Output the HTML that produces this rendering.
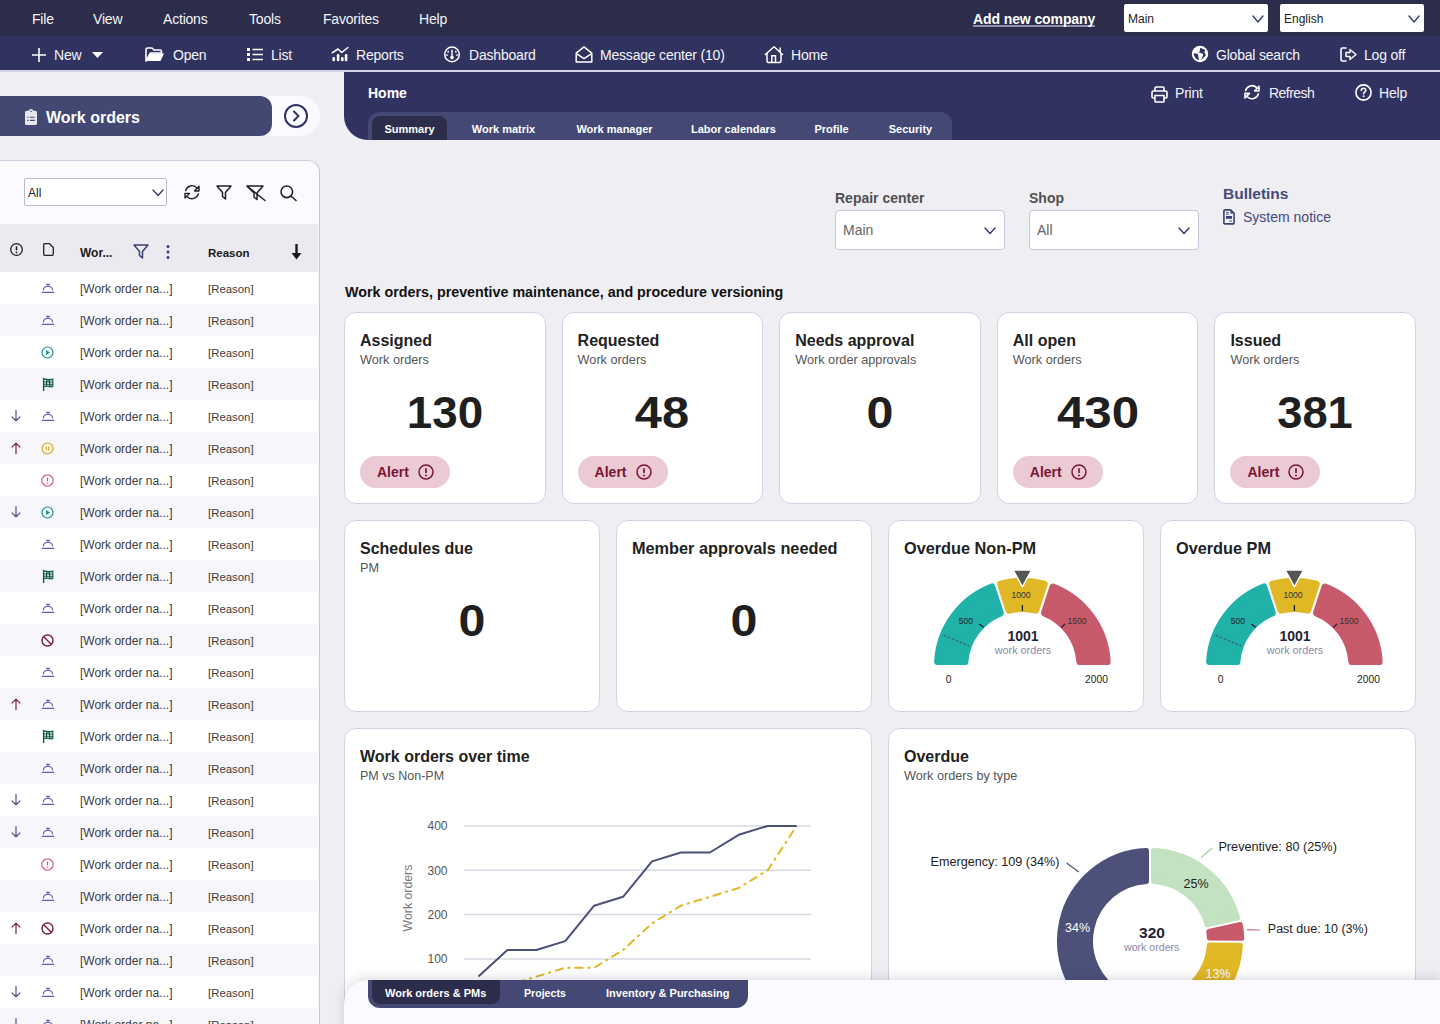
<!DOCTYPE html><html><head><meta charset="utf-8"><style>
html,body{margin:0;padding:0;}
body{width:1440px;height:1024px;overflow:hidden;position:relative;background:#efeef3;font-family:"Liberation Sans", sans-serif;}
.t{position:absolute;white-space:nowrap;}
svg{display:block;}
</style></head><body>
<div style="position:absolute;left:0px;top:0px;width:1440px;height:36px;background:#2b2d4a;"></div>
<div class="t" style="left:32px;top:12.00px;font-size:14px;font-weight:400;color:#f4f4f8;line-height:15.64px;letter-spacing:-0.2px;">File</div>
<div class="t" style="left:93px;top:12.00px;font-size:14px;font-weight:400;color:#f4f4f8;line-height:15.64px;letter-spacing:-0.2px;">View</div>
<div class="t" style="left:163px;top:12.00px;font-size:14px;font-weight:400;color:#f4f4f8;line-height:15.64px;letter-spacing:-0.2px;">Actions</div>
<div class="t" style="left:249px;top:12.00px;font-size:14px;font-weight:400;color:#f4f4f8;line-height:15.64px;letter-spacing:-0.2px;">Tools</div>
<div class="t" style="left:323px;top:12.00px;font-size:14px;font-weight:400;color:#f4f4f8;line-height:15.64px;letter-spacing:-0.2px;">Favorites</div>
<div class="t" style="left:419px;top:12.00px;font-size:14px;font-weight:400;color:#f4f4f8;line-height:15.64px;letter-spacing:-0.2px;">Help</div>
<div style="position:absolute;left:973px;top:25px;width:122px;height:2px;background:#8f8fa8;"></div>
<div class="t" style="left:973px;top:12.00px;font-size:14px;font-weight:700;color:#fff;line-height:15.64px;letter-spacing:-0.1px;">Add new company</div>
<div style="position:absolute;left:1124px;top:4px;width:144px;height:28px;background:#fff;border-radius:2px;"></div>
<div class="t" style="left:1128px;top:13.00px;font-size:12px;font-weight:400;color:#222;line-height:13.40px;">Main</div>
<svg style="position:absolute;left:1253px;top:16px;overflow:visible;" width="10" height="6" viewBox="0 0 10 6" fill="none"><path d="M0 0 L5.0 6 L10 0" stroke="#3a3f70" stroke-width="1.4" stroke-linecap="round" stroke-linejoin="round"/></svg>
<div style="position:absolute;left:1280px;top:4px;width:144px;height:28px;background:#fff;border-radius:2px;"></div>
<div class="t" style="left:1284px;top:13.00px;font-size:12px;font-weight:400;color:#222;line-height:13.40px;">English</div>
<svg style="position:absolute;left:1409px;top:16px;overflow:visible;" width="10" height="6" viewBox="0 0 10 6" fill="none"><path d="M0 0 L5.0 6 L10 0" stroke="#3a3f70" stroke-width="1.4" stroke-linecap="round" stroke-linejoin="round"/></svg>
<div style="position:absolute;left:0px;top:36px;width:1440px;height:34px;background:#30325f;"></div>
<div style="position:absolute;left:0px;top:70px;width:1440px;height:2px;background:#d4d3e0;"></div>
<svg style="position:absolute;left:32px;top:48px;overflow:visible;" width="14" height="14" viewBox="0 0 14 14" fill="none"><path d="M7 0V14M0 7H14" stroke="#fff" stroke-width="1.6"/></svg>
<div class="t" style="left:54px;top:48.00px;font-size:14px;font-weight:400;color:#f4f4f8;line-height:15.64px;letter-spacing:-0.2px;">New</div>
<svg style="position:absolute;left:92px;top:52px;overflow:visible;" width="11" height="6" viewBox="0 0 11 6" fill="none"><path d="M0 0H11L5.5 6Z" fill="#fff"/></svg>
<svg style="position:absolute;left:145px;top:47px;overflow:visible;" width="20" height="15" viewBox="0 0 20 15" fill="none"><path d="M1 2.5C1 1.7 1.7 1 2.5 1H7L9 3H15C15.8 3 16.5 3.7 16.5 4.5V6H5.5L1 14Z" stroke="#fff" stroke-width="1.6" stroke-linejoin="round"/><path d="M4.5 6.5H19L15.5 14H1Z" fill="#fff"/></svg>
<div class="t" style="left:173px;top:48.00px;font-size:14px;font-weight:400;color:#f4f4f8;line-height:15.64px;letter-spacing:-0.2px;">Open</div>
<svg style="position:absolute;left:247px;top:48px;overflow:visible;" width="16" height="13" viewBox="0 0 16 13" fill="none"><rect x="0" y="0" width="3" height="3" fill="#fff"/><rect x="0" y="5" width="3" height="3" fill="#fff"/><rect x="0" y="10" width="3" height="3" fill="#fff"/><path d="M5.5 1.5H16M5.5 6.5H16M5.5 11.5H16" stroke="#fff" stroke-width="1.5"/></svg>
<div class="t" style="left:271px;top:48.00px;font-size:14px;font-weight:400;color:#f4f4f8;line-height:15.64px;letter-spacing:-0.2px;">List</div>
<svg style="position:absolute;left:331px;top:46px;overflow:visible;" width="18" height="16" viewBox="0 0 18 16" fill="none"><path d="M1.1 6.8L7 3L10.75 6.5L16.9 1.5" stroke="#fff" stroke-width="1.5" stroke-linecap="round" stroke-linejoin="round"/><rect x="1.4" y="10.9" width="2.6" height="4.3" rx="1.2" fill="#fff"/><rect x="5.8" y="8" width="2.6" height="7.2" rx="1.2" fill="#fff"/><rect x="10" y="10.9" width="2.6" height="4.3" rx="1.2" fill="#fff"/><rect x="13.8" y="8" width="2.6" height="7.2" rx="1.2" fill="#fff"/></svg>
<div class="t" style="left:356px;top:48.00px;font-size:14px;font-weight:400;color:#f4f4f8;line-height:15.64px;letter-spacing:-0.2px;">Reports</div>
<svg style="position:absolute;left:443px;top:46px;overflow:visible;" width="18" height="18" viewBox="0 0 18 18" fill="none"><circle cx="9" cy="8.4" r="7.3" stroke="#fff" stroke-width="1.5"/><path d="M9 4.2V11" stroke="#fff" stroke-width="1.4" stroke-linecap="round"/><circle cx="9" cy="11.6" r="1.8" fill="#fff"/><circle cx="5.2" cy="5.7" r="0.9" fill="#fff"/><circle cx="12.8" cy="5.7" r="0.9" fill="#fff"/><circle cx="4" cy="9.1" r="0.9" fill="#fff"/><circle cx="14" cy="9.1" r="0.9" fill="#fff"/></svg>
<div class="t" style="left:469px;top:48.00px;font-size:14px;font-weight:400;color:#f4f4f8;line-height:15.64px;letter-spacing:-0.2px;">Dashboard</div>
<svg style="position:absolute;left:575px;top:46px;overflow:visible;" width="18" height="18" viewBox="0 0 18 18" fill="none"><path d="M1.2 7.2L9 0.9L16.8 7.2V16.1H1.2Z" stroke="#fff" stroke-width="1.5" stroke-linejoin="round"/><path d="M1.4 7.6L9 12.6L16.6 7.6" stroke="#fff" stroke-width="1.5" stroke-linejoin="round"/></svg>
<div class="t" style="left:600px;top:48.00px;font-size:14px;font-weight:400;color:#f4f4f8;line-height:15.64px;letter-spacing:-0.2px;">Message center (10)</div>
<svg style="position:absolute;left:764px;top:45px;overflow:visible;" width="20" height="19" viewBox="0 0 20 19" fill="none"><path d="M1.3 9.5L10.1 1.7L18.5 9.5" stroke="#fff" stroke-width="1.5" stroke-linecap="round" stroke-linejoin="round"/><path d="M16.2 2.5V7.2" stroke="#fff" stroke-width="1.5"/><path d="M3 8V15.5C3 16.5 3.5 17.4 4.5 17.4H15.5C16.5 17.4 17 16.5 17 15.5V8" stroke="#fff" stroke-width="1.5"/><path d="M7.8 17.4V10.8H11.5V17.4" stroke="#fff" stroke-width="1.5"/></svg>
<div class="t" style="left:791px;top:48.00px;font-size:14px;font-weight:400;color:#f4f4f8;line-height:15.64px;letter-spacing:-0.2px;">Home</div>
<svg style="position:absolute;left:1191px;top:45px;overflow:visible;" width="18" height="18" viewBox="0 0 18 18" fill="none"><defs><clipPath id="gclip"><circle cx="9" cy="9" r="6.6"/></clipPath></defs><circle cx="9" cy="9" r="8.2" fill="#fff"/><g clip-path="url(#gclip)" fill="#30325f"><path d="M9.4 2.8L14.2 5.1L13.3 7.5L15 10.3L10 15.2L11.8 11L12.2 9.1L9.9 8L7.1 7.3L9 6.3L9 3.8Z"/><path d="M2.7 8.2L6.7 8.7L7.1 10.1L7.9 15.2L4.8 13.4L2.6 10.1Z"/></g></svg>
<div class="t" style="left:1216px;top:48.00px;font-size:14px;font-weight:400;color:#f4f4f8;line-height:15.64px;letter-spacing:-0.2px;">Global search</div>
<svg style="position:absolute;left:1340px;top:47px;overflow:visible;" width="17" height="15" viewBox="0 0 17 15" fill="none"><path d="M6 1H2.5C1.7 1 1 1.7 1 2.5V12.5C1 13.3 1.7 14 2.5 14H6" stroke="#fff" stroke-width="1.6" stroke-linecap="round"/><path d="M6 5.5H10V2.5L16 7.5L10 12.5V9.5H6Z" stroke="#fff" stroke-width="1.5" stroke-linejoin="round"/></svg>
<div class="t" style="left:1364px;top:48.00px;font-size:14px;font-weight:400;color:#f4f4f8;line-height:15.64px;letter-spacing:-0.2px;">Log off</div>
<div style="position:absolute;left:0px;top:96px;width:320px;height:40px;background:#fbfaff;border-radius:0 20px 20px 0;"></div>
<div style="position:absolute;left:0px;top:96px;width:272px;height:40px;background:#434873;border-radius:0 12px 12px 0;"></div>
<svg style="position:absolute;left:25px;top:109px;overflow:visible;" width="12" height="17" viewBox="0 0 12 17" fill="none"><rect x="0" y="1.8" width="12" height="14.2" rx="1.6" fill="#e9e8f0"/><circle cx="6" cy="2.2" r="2.2" fill="#e9e8f0"/><circle cx="6" cy="2.3" r="0.8" fill="#434873"/><path d="M2.2 8.2H3.6M5 8.2H9.8M2.2 11.4H3.6M5 11.4H9.8" stroke="#434873" stroke-width="1.1"/></svg>
<div class="t" style="left:46px;top:109.00px;font-size:16px;font-weight:700;color:#fff;line-height:17.87px;">Work orders</div>
<svg style="position:absolute;left:284px;top:104px;overflow:visible;" width="24" height="24" viewBox="0 0 24 24" fill="none"><circle cx="12" cy="12" r="11" stroke="#303262" stroke-width="2"/><path d="M10 7.5L14.5 12L10 16.5" stroke="#303262" stroke-width="2" stroke-linecap="round" stroke-linejoin="round"/></svg>
<div style="position:absolute;left:-2px;top:160px;width:322px;height:900px;background:#fbfaff;border-top:1px solid #cfcee0;border-right:1.5px solid #c7c6d8;border-top-right-radius:12px;box-sizing:border-box;"></div>
<div style="position:absolute;left:24px;top:178px;width:143px;height:28px;background:#fff;border:1px solid #b9b8cf;border-radius:2px;box-sizing:border-box;"></div>
<div class="t" style="left:28px;top:187.00px;font-size:12px;font-weight:400;color:#222;line-height:13.40px;">All</div>
<svg style="position:absolute;left:153px;top:190px;overflow:visible;" width="10" height="5.5" viewBox="0 0 10 5.5" fill="none"><path d="M0 0 L5.0 5.5 L10 0" stroke="#3a3f70" stroke-width="1.4" stroke-linecap="round" stroke-linejoin="round"/></svg>
<svg style="position:absolute;left:184px;top:185px;overflow:visible;" width="16" height="15" viewBox="0 0 16 15" fill="none"><path d="M1.63 5.49A6.6 6.6 0 0 1 12.4 2.4" stroke="#222" stroke-width="1.4" stroke-linecap="round"/><path d="M15 1.3V6H10.6Z" stroke="#222" stroke-width="1.4" stroke-linejoin="round"/><path d="M14.37 8.91A6.6 6.6 0 0 1 3.6 12" stroke="#222" stroke-width="1.4" stroke-linecap="round"/><path d="M1 8.4H5.4L1 12.9Z" stroke="#222" stroke-width="1.4" stroke-linejoin="round"/></svg>
<svg style="position:absolute;left:216px;top:185px;overflow:visible;" width="16" height="15" viewBox="0 0 16 15" fill="none"><path d="M1 1H15L9.5 7.5V14L6.5 11.5V7.5Z" stroke="#222" stroke-width="1.5" stroke-linejoin="round"/></svg>
<svg style="position:absolute;left:246px;top:185px;overflow:visible;" width="20" height="16" viewBox="0 0 20 16" fill="none"><path d="M1 1H17L11 8V14.5L8 12V8Z" stroke="#222" stroke-width="1.5" stroke-linejoin="round"/><path d="M1.5 1.5L19 15.5" stroke="#222" stroke-width="1.5" stroke-linecap="round"/></svg>
<svg style="position:absolute;left:280px;top:185px;overflow:visible;" width="17" height="16" viewBox="0 0 17 16" fill="none"><circle cx="6.8" cy="6.8" r="5.8" stroke="#222" stroke-width="1.6"/><path d="M11 11L16 15.5" stroke="#222" stroke-width="1.6" stroke-linecap="round"/></svg>
<div style="position:absolute;left:0px;top:224px;width:318px;height:48px;background:#ebeaf0;"></div>
<svg style="position:absolute;left:10px;top:243px;overflow:visible;" width="13" height="13" viewBox="0 0 13 13" fill="none"><circle cx="6.5" cy="6.5" r="5.8" stroke="#222" stroke-width="1.3"/><path d="M6.5 3.3V7.3" stroke="#222" stroke-width="1.6"/><circle cx="6.5" cy="9.4" r="0.9" fill="#222"/></svg>
<svg style="position:absolute;left:43px;top:243px;overflow:visible;" width="11" height="13" viewBox="0 0 11 13" fill="none"><path d="M1.5 0.7H6.5L10.3 4.5V11.3C10.3 11.9 9.9 12.3 9.3 12.3H1.5C0.9 12.3 0.7 11.9 0.7 11.3V1.7C0.7 1.1 0.9 0.7 1.5 0.7Z" stroke="#222" stroke-width="1.3" stroke-linejoin="round"/></svg>
<div class="t" style="left:80px;top:247.00px;font-size:12px;font-weight:700;color:#1a1a1a;line-height:13.40px;">Wor...</div>
<svg style="position:absolute;left:133px;top:244px;overflow:visible;" width="16" height="15" viewBox="0 0 16 15" fill="none"><path d="M1 1H15L9.5 7.5V14L6.5 11.5V7.5Z" stroke="#3a3f70" stroke-width="1.5" stroke-linejoin="round"/></svg>
<svg style="position:absolute;left:166px;top:245px;overflow:visible;" width="4" height="14" viewBox="0 0 4 14" fill="none"><circle cx="2" cy="1.6" r="1.5" fill="#3a3f70"/><circle cx="2" cy="7" r="1.5" fill="#3a3f70"/><circle cx="2" cy="12.4" r="1.5" fill="#3a3f70"/></svg>
<div class="t" style="left:208px;top:247.00px;font-size:11.5px;font-weight:700;color:#1a1a1a;line-height:12.85px;">Reason</div>
<svg style="position:absolute;left:291px;top:244px;overflow:visible;" width="11" height="16" viewBox="0 0 11 16" fill="none"><path d="M5.5 0V12" stroke="#1a1a1a" stroke-width="2.4"/><path d="M0.5 9L5.5 15.5L10.5 9Z" fill="#1a1a1a"/></svg>
<div style="position:absolute;left:0px;top:272px;width:318px;height:32px;background:#fff;"></div>
<svg style="position:absolute;left:41.9px;top:283px;overflow:visible;" width="12" height="10" viewBox="0 0 12 10" fill="none"><path d="M1.4 7.6C1.4 4.8 3.4 3.2 6 3.2C8.6 3.2 10.6 4.8 10.6 7.6" stroke="#7650c0" stroke-width="1.1"/><path d="M0.4 9.45H11.6" stroke="#7650c0" stroke-width="1.2" stroke-linecap="round"/><path d="M6 1.5V3.2" stroke="#7650c0" stroke-width="1"/><path d="M4.6 1.4H7.4" stroke="#7650c0" stroke-width="1.1" stroke-linecap="round"/></svg>
<div class="t" style="left:80px;top:283.00px;font-size:12px;font-weight:400;color:#3c3c3c;line-height:13.40px;">[Work order na...]</div>
<div class="t" style="left:208px;top:283.00px;font-size:11.4px;font-weight:400;color:#3c3c3c;line-height:12.73px;">[Reason]</div>
<div style="position:absolute;left:0px;top:304px;width:318px;height:32px;background:#f7f6fb;"></div>
<svg style="position:absolute;left:41.9px;top:315px;overflow:visible;" width="12" height="10" viewBox="0 0 12 10" fill="none"><path d="M1.4 7.6C1.4 4.8 3.4 3.2 6 3.2C8.6 3.2 10.6 4.8 10.6 7.6" stroke="#7650c0" stroke-width="1.1"/><path d="M0.4 9.45H11.6" stroke="#7650c0" stroke-width="1.2" stroke-linecap="round"/><path d="M6 1.5V3.2" stroke="#7650c0" stroke-width="1"/><path d="M4.6 1.4H7.4" stroke="#7650c0" stroke-width="1.1" stroke-linecap="round"/></svg>
<div class="t" style="left:80px;top:315.00px;font-size:12px;font-weight:400;color:#3c3c3c;line-height:13.40px;">[Work order na...]</div>
<div class="t" style="left:208px;top:315.00px;font-size:11.4px;font-weight:400;color:#3c3c3c;line-height:12.73px;">[Reason]</div>
<div style="position:absolute;left:0px;top:336px;width:318px;height:32px;background:#fff;"></div>
<svg style="position:absolute;left:41.4px;top:345.5px;overflow:visible;" width="13" height="13" viewBox="0 0 13 13" fill="none"><circle cx="6.5" cy="6.5" r="5.5" stroke="#168f8f" stroke-width="1.2"/><path d="M5.1 4L9 6.5L5.1 9Z" fill="#168f8f"/></svg>
<div class="t" style="left:80px;top:347.00px;font-size:12px;font-weight:400;color:#3c3c3c;line-height:13.40px;">[Work order na...]</div>
<div class="t" style="left:208px;top:347.00px;font-size:11.4px;font-weight:400;color:#3c3c3c;line-height:12.73px;">[Reason]</div>
<div style="position:absolute;left:0px;top:368px;width:318px;height:32px;background:#f7f6fb;"></div>
<svg style="position:absolute;left:42.9px;top:378px;overflow:visible;" width="11" height="13" viewBox="0 0 11 13" fill="none"><path d="M0.6 0.4V12.4" stroke="#155a45" stroke-width="1.4" stroke-linecap="round"/><path d="M0.6 1.3C3 0.5 4.5 1.9 6.5 1.7C8 1.6 9 1.1 9.8 1.1V8.5C8.5 9.2 7.2 9 6.5 8.6C4.5 7.8 3 8 0.6 8.6" stroke="#155a45" stroke-width="1.2"/><path d="M3.5 1.2V8.2M6.6 1.7V8.6M0.6 4H9.8M0.6 6.3H9.8" stroke="#155a45" stroke-width="1.1"/><rect x="3.5" y="1.5" width="3" height="2.5" fill="#155a45" opacity="0.5"/><rect x="6.6" y="6.3" width="3.2" height="2.3" fill="#155a45" opacity="0.5"/></svg>
<div class="t" style="left:80px;top:379.00px;font-size:12px;font-weight:400;color:#3c3c3c;line-height:13.40px;">[Work order na...]</div>
<div class="t" style="left:208px;top:379.00px;font-size:11.4px;font-weight:400;color:#3c3c3c;line-height:12.73px;">[Reason]</div>
<div style="position:absolute;left:0px;top:400px;width:318px;height:32px;background:#fff;"></div>
<svg style="position:absolute;left:10.5px;top:410px;overflow:visible;" width="10" height="12" viewBox="0 0 10 12" fill="none"><path d="M5 0.6V10.8M1.1 6.9L5 10.8L8.9 6.9" stroke="#4a4e80" stroke-width="1.2" stroke-linejoin="round" stroke-linecap="round"/></svg>
<svg style="position:absolute;left:41.9px;top:411px;overflow:visible;" width="12" height="10" viewBox="0 0 12 10" fill="none"><path d="M1.4 7.6C1.4 4.8 3.4 3.2 6 3.2C8.6 3.2 10.6 4.8 10.6 7.6" stroke="#7650c0" stroke-width="1.1"/><path d="M0.4 9.45H11.6" stroke="#7650c0" stroke-width="1.2" stroke-linecap="round"/><path d="M6 1.5V3.2" stroke="#7650c0" stroke-width="1"/><path d="M4.6 1.4H7.4" stroke="#7650c0" stroke-width="1.1" stroke-linecap="round"/></svg>
<div class="t" style="left:80px;top:411.00px;font-size:12px;font-weight:400;color:#3c3c3c;line-height:13.40px;">[Work order na...]</div>
<div class="t" style="left:208px;top:411.00px;font-size:11.4px;font-weight:400;color:#3c3c3c;line-height:12.73px;">[Reason]</div>
<div style="position:absolute;left:0px;top:432px;width:318px;height:32px;background:#f7f6fb;"></div>
<svg style="position:absolute;left:10.5px;top:442px;overflow:visible;" width="10" height="12" viewBox="0 0 10 12" fill="none"><path d="M5 11.4V1.2M1.1 5.1L5 1.2L8.9 5.1" stroke="#7b1d3c" stroke-width="1.2" stroke-linejoin="round" stroke-linecap="round"/></svg>
<svg style="position:absolute;left:41.4px;top:441.5px;overflow:visible;" width="13" height="13" viewBox="0 0 13 13" fill="none"><circle cx="6.5" cy="6.5" r="5.5" stroke="#d4a20f" stroke-width="1.1"/><path d="M5.3 4.6V8.2M7.7 4.6V8.2" stroke="#d4a20f" stroke-width="1.1"/></svg>
<div class="t" style="left:80px;top:443.00px;font-size:12px;font-weight:400;color:#3c3c3c;line-height:13.40px;">[Work order na...]</div>
<div class="t" style="left:208px;top:443.00px;font-size:11.4px;font-weight:400;color:#3c3c3c;line-height:12.73px;">[Reason]</div>
<div style="position:absolute;left:0px;top:464px;width:318px;height:32px;background:#fff;"></div>
<svg style="position:absolute;left:41.4px;top:473.5px;overflow:visible;" width="13" height="13" viewBox="0 0 13 13" fill="none"><path d="M4.4 1H8.6L12 4.4V8.6L8.6 12H4.4L1 8.6V4.4Z" stroke="#d2546a" stroke-width="1.1" stroke-linejoin="round"/><path d="M6.5 3.7V7.2" stroke="#d2546a" stroke-width="1.2"/><circle cx="6.5" cy="9.1" r="0.75" fill="#d2546a"/></svg>
<div class="t" style="left:80px;top:475.00px;font-size:12px;font-weight:400;color:#3c3c3c;line-height:13.40px;">[Work order na...]</div>
<div class="t" style="left:208px;top:475.00px;font-size:11.4px;font-weight:400;color:#3c3c3c;line-height:12.73px;">[Reason]</div>
<div style="position:absolute;left:0px;top:496px;width:318px;height:32px;background:#f7f6fb;"></div>
<svg style="position:absolute;left:10.5px;top:506px;overflow:visible;" width="10" height="12" viewBox="0 0 10 12" fill="none"><path d="M5 0.6V10.8M1.1 6.9L5 10.8L8.9 6.9" stroke="#4a4e80" stroke-width="1.2" stroke-linejoin="round" stroke-linecap="round"/></svg>
<svg style="position:absolute;left:41.4px;top:505.5px;overflow:visible;" width="13" height="13" viewBox="0 0 13 13" fill="none"><circle cx="6.5" cy="6.5" r="5.5" stroke="#168f8f" stroke-width="1.2"/><path d="M5.1 4L9 6.5L5.1 9Z" fill="#168f8f"/></svg>
<div class="t" style="left:80px;top:507.00px;font-size:12px;font-weight:400;color:#3c3c3c;line-height:13.40px;">[Work order na...]</div>
<div class="t" style="left:208px;top:507.00px;font-size:11.4px;font-weight:400;color:#3c3c3c;line-height:12.73px;">[Reason]</div>
<div style="position:absolute;left:0px;top:528px;width:318px;height:32px;background:#fff;"></div>
<svg style="position:absolute;left:41.9px;top:539px;overflow:visible;" width="12" height="10" viewBox="0 0 12 10" fill="none"><path d="M1.4 7.6C1.4 4.8 3.4 3.2 6 3.2C8.6 3.2 10.6 4.8 10.6 7.6" stroke="#7650c0" stroke-width="1.1"/><path d="M0.4 9.45H11.6" stroke="#7650c0" stroke-width="1.2" stroke-linecap="round"/><path d="M6 1.5V3.2" stroke="#7650c0" stroke-width="1"/><path d="M4.6 1.4H7.4" stroke="#7650c0" stroke-width="1.1" stroke-linecap="round"/></svg>
<div class="t" style="left:80px;top:539.00px;font-size:12px;font-weight:400;color:#3c3c3c;line-height:13.40px;">[Work order na...]</div>
<div class="t" style="left:208px;top:539.00px;font-size:11.4px;font-weight:400;color:#3c3c3c;line-height:12.73px;">[Reason]</div>
<div style="position:absolute;left:0px;top:560px;width:318px;height:32px;background:#f7f6fb;"></div>
<svg style="position:absolute;left:42.9px;top:570px;overflow:visible;" width="11" height="13" viewBox="0 0 11 13" fill="none"><path d="M0.6 0.4V12.4" stroke="#155a45" stroke-width="1.4" stroke-linecap="round"/><path d="M0.6 1.3C3 0.5 4.5 1.9 6.5 1.7C8 1.6 9 1.1 9.8 1.1V8.5C8.5 9.2 7.2 9 6.5 8.6C4.5 7.8 3 8 0.6 8.6" stroke="#155a45" stroke-width="1.2"/><path d="M3.5 1.2V8.2M6.6 1.7V8.6M0.6 4H9.8M0.6 6.3H9.8" stroke="#155a45" stroke-width="1.1"/><rect x="3.5" y="1.5" width="3" height="2.5" fill="#155a45" opacity="0.5"/><rect x="6.6" y="6.3" width="3.2" height="2.3" fill="#155a45" opacity="0.5"/></svg>
<div class="t" style="left:80px;top:571.00px;font-size:12px;font-weight:400;color:#3c3c3c;line-height:13.40px;">[Work order na...]</div>
<div class="t" style="left:208px;top:571.00px;font-size:11.4px;font-weight:400;color:#3c3c3c;line-height:12.73px;">[Reason]</div>
<div style="position:absolute;left:0px;top:592px;width:318px;height:32px;background:#fff;"></div>
<svg style="position:absolute;left:41.9px;top:603px;overflow:visible;" width="12" height="10" viewBox="0 0 12 10" fill="none"><path d="M1.4 7.6C1.4 4.8 3.4 3.2 6 3.2C8.6 3.2 10.6 4.8 10.6 7.6" stroke="#7650c0" stroke-width="1.1"/><path d="M0.4 9.45H11.6" stroke="#7650c0" stroke-width="1.2" stroke-linecap="round"/><path d="M6 1.5V3.2" stroke="#7650c0" stroke-width="1"/><path d="M4.6 1.4H7.4" stroke="#7650c0" stroke-width="1.1" stroke-linecap="round"/></svg>
<div class="t" style="left:80px;top:603.00px;font-size:12px;font-weight:400;color:#3c3c3c;line-height:13.40px;">[Work order na...]</div>
<div class="t" style="left:208px;top:603.00px;font-size:11.4px;font-weight:400;color:#3c3c3c;line-height:12.73px;">[Reason]</div>
<div style="position:absolute;left:0px;top:624px;width:318px;height:32px;background:#f7f6fb;"></div>
<svg style="position:absolute;left:41.4px;top:633.5px;overflow:visible;" width="13" height="13" viewBox="0 0 13 13" fill="none"><circle cx="6.5" cy="6.5" r="5.5" stroke="#7b1d3c" stroke-width="1.4"/><path d="M2.7 2.7L10.3 10.3" stroke="#7b1d3c" stroke-width="1.4"/></svg>
<div class="t" style="left:80px;top:635.00px;font-size:12px;font-weight:400;color:#3c3c3c;line-height:13.40px;">[Work order na...]</div>
<div class="t" style="left:208px;top:635.00px;font-size:11.4px;font-weight:400;color:#3c3c3c;line-height:12.73px;">[Reason]</div>
<div style="position:absolute;left:0px;top:656px;width:318px;height:32px;background:#fff;"></div>
<svg style="position:absolute;left:41.9px;top:667px;overflow:visible;" width="12" height="10" viewBox="0 0 12 10" fill="none"><path d="M1.4 7.6C1.4 4.8 3.4 3.2 6 3.2C8.6 3.2 10.6 4.8 10.6 7.6" stroke="#7650c0" stroke-width="1.1"/><path d="M0.4 9.45H11.6" stroke="#7650c0" stroke-width="1.2" stroke-linecap="round"/><path d="M6 1.5V3.2" stroke="#7650c0" stroke-width="1"/><path d="M4.6 1.4H7.4" stroke="#7650c0" stroke-width="1.1" stroke-linecap="round"/></svg>
<div class="t" style="left:80px;top:667.00px;font-size:12px;font-weight:400;color:#3c3c3c;line-height:13.40px;">[Work order na...]</div>
<div class="t" style="left:208px;top:667.00px;font-size:11.4px;font-weight:400;color:#3c3c3c;line-height:12.73px;">[Reason]</div>
<div style="position:absolute;left:0px;top:688px;width:318px;height:32px;background:#f7f6fb;"></div>
<svg style="position:absolute;left:10.5px;top:698px;overflow:visible;" width="10" height="12" viewBox="0 0 10 12" fill="none"><path d="M5 11.4V1.2M1.1 5.1L5 1.2L8.9 5.1" stroke="#7b1d3c" stroke-width="1.2" stroke-linejoin="round" stroke-linecap="round"/></svg>
<svg style="position:absolute;left:41.9px;top:699px;overflow:visible;" width="12" height="10" viewBox="0 0 12 10" fill="none"><path d="M1.4 7.6C1.4 4.8 3.4 3.2 6 3.2C8.6 3.2 10.6 4.8 10.6 7.6" stroke="#7650c0" stroke-width="1.1"/><path d="M0.4 9.45H11.6" stroke="#7650c0" stroke-width="1.2" stroke-linecap="round"/><path d="M6 1.5V3.2" stroke="#7650c0" stroke-width="1"/><path d="M4.6 1.4H7.4" stroke="#7650c0" stroke-width="1.1" stroke-linecap="round"/></svg>
<div class="t" style="left:80px;top:699.00px;font-size:12px;font-weight:400;color:#3c3c3c;line-height:13.40px;">[Work order na...]</div>
<div class="t" style="left:208px;top:699.00px;font-size:11.4px;font-weight:400;color:#3c3c3c;line-height:12.73px;">[Reason]</div>
<div style="position:absolute;left:0px;top:720px;width:318px;height:32px;background:#fff;"></div>
<svg style="position:absolute;left:42.9px;top:730px;overflow:visible;" width="11" height="13" viewBox="0 0 11 13" fill="none"><path d="M0.6 0.4V12.4" stroke="#155a45" stroke-width="1.4" stroke-linecap="round"/><path d="M0.6 1.3C3 0.5 4.5 1.9 6.5 1.7C8 1.6 9 1.1 9.8 1.1V8.5C8.5 9.2 7.2 9 6.5 8.6C4.5 7.8 3 8 0.6 8.6" stroke="#155a45" stroke-width="1.2"/><path d="M3.5 1.2V8.2M6.6 1.7V8.6M0.6 4H9.8M0.6 6.3H9.8" stroke="#155a45" stroke-width="1.1"/><rect x="3.5" y="1.5" width="3" height="2.5" fill="#155a45" opacity="0.5"/><rect x="6.6" y="6.3" width="3.2" height="2.3" fill="#155a45" opacity="0.5"/></svg>
<div class="t" style="left:80px;top:731.00px;font-size:12px;font-weight:400;color:#3c3c3c;line-height:13.40px;">[Work order na...]</div>
<div class="t" style="left:208px;top:731.00px;font-size:11.4px;font-weight:400;color:#3c3c3c;line-height:12.73px;">[Reason]</div>
<div style="position:absolute;left:0px;top:752px;width:318px;height:32px;background:#f7f6fb;"></div>
<svg style="position:absolute;left:41.9px;top:763px;overflow:visible;" width="12" height="10" viewBox="0 0 12 10" fill="none"><path d="M1.4 7.6C1.4 4.8 3.4 3.2 6 3.2C8.6 3.2 10.6 4.8 10.6 7.6" stroke="#7650c0" stroke-width="1.1"/><path d="M0.4 9.45H11.6" stroke="#7650c0" stroke-width="1.2" stroke-linecap="round"/><path d="M6 1.5V3.2" stroke="#7650c0" stroke-width="1"/><path d="M4.6 1.4H7.4" stroke="#7650c0" stroke-width="1.1" stroke-linecap="round"/></svg>
<div class="t" style="left:80px;top:763.00px;font-size:12px;font-weight:400;color:#3c3c3c;line-height:13.40px;">[Work order na...]</div>
<div class="t" style="left:208px;top:763.00px;font-size:11.4px;font-weight:400;color:#3c3c3c;line-height:12.73px;">[Reason]</div>
<div style="position:absolute;left:0px;top:784px;width:318px;height:32px;background:#fff;"></div>
<svg style="position:absolute;left:10.5px;top:794px;overflow:visible;" width="10" height="12" viewBox="0 0 10 12" fill="none"><path d="M5 0.6V10.8M1.1 6.9L5 10.8L8.9 6.9" stroke="#4a4e80" stroke-width="1.2" stroke-linejoin="round" stroke-linecap="round"/></svg>
<svg style="position:absolute;left:41.9px;top:795px;overflow:visible;" width="12" height="10" viewBox="0 0 12 10" fill="none"><path d="M1.4 7.6C1.4 4.8 3.4 3.2 6 3.2C8.6 3.2 10.6 4.8 10.6 7.6" stroke="#7650c0" stroke-width="1.1"/><path d="M0.4 9.45H11.6" stroke="#7650c0" stroke-width="1.2" stroke-linecap="round"/><path d="M6 1.5V3.2" stroke="#7650c0" stroke-width="1"/><path d="M4.6 1.4H7.4" stroke="#7650c0" stroke-width="1.1" stroke-linecap="round"/></svg>
<div class="t" style="left:80px;top:795.00px;font-size:12px;font-weight:400;color:#3c3c3c;line-height:13.40px;">[Work order na...]</div>
<div class="t" style="left:208px;top:795.00px;font-size:11.4px;font-weight:400;color:#3c3c3c;line-height:12.73px;">[Reason]</div>
<div style="position:absolute;left:0px;top:816px;width:318px;height:32px;background:#f7f6fb;"></div>
<svg style="position:absolute;left:10.5px;top:826px;overflow:visible;" width="10" height="12" viewBox="0 0 10 12" fill="none"><path d="M5 0.6V10.8M1.1 6.9L5 10.8L8.9 6.9" stroke="#4a4e80" stroke-width="1.2" stroke-linejoin="round" stroke-linecap="round"/></svg>
<svg style="position:absolute;left:41.9px;top:827px;overflow:visible;" width="12" height="10" viewBox="0 0 12 10" fill="none"><path d="M1.4 7.6C1.4 4.8 3.4 3.2 6 3.2C8.6 3.2 10.6 4.8 10.6 7.6" stroke="#7650c0" stroke-width="1.1"/><path d="M0.4 9.45H11.6" stroke="#7650c0" stroke-width="1.2" stroke-linecap="round"/><path d="M6 1.5V3.2" stroke="#7650c0" stroke-width="1"/><path d="M4.6 1.4H7.4" stroke="#7650c0" stroke-width="1.1" stroke-linecap="round"/></svg>
<div class="t" style="left:80px;top:827.00px;font-size:12px;font-weight:400;color:#3c3c3c;line-height:13.40px;">[Work order na...]</div>
<div class="t" style="left:208px;top:827.00px;font-size:11.4px;font-weight:400;color:#3c3c3c;line-height:12.73px;">[Reason]</div>
<div style="position:absolute;left:0px;top:848px;width:318px;height:32px;background:#fff;"></div>
<svg style="position:absolute;left:41.4px;top:857.5px;overflow:visible;" width="13" height="13" viewBox="0 0 13 13" fill="none"><path d="M4.4 1H8.6L12 4.4V8.6L8.6 12H4.4L1 8.6V4.4Z" stroke="#d2546a" stroke-width="1.1" stroke-linejoin="round"/><path d="M6.5 3.7V7.2" stroke="#d2546a" stroke-width="1.2"/><circle cx="6.5" cy="9.1" r="0.75" fill="#d2546a"/></svg>
<div class="t" style="left:80px;top:859.00px;font-size:12px;font-weight:400;color:#3c3c3c;line-height:13.40px;">[Work order na...]</div>
<div class="t" style="left:208px;top:859.00px;font-size:11.4px;font-weight:400;color:#3c3c3c;line-height:12.73px;">[Reason]</div>
<div style="position:absolute;left:0px;top:880px;width:318px;height:32px;background:#f7f6fb;"></div>
<svg style="position:absolute;left:41.9px;top:891px;overflow:visible;" width="12" height="10" viewBox="0 0 12 10" fill="none"><path d="M1.4 7.6C1.4 4.8 3.4 3.2 6 3.2C8.6 3.2 10.6 4.8 10.6 7.6" stroke="#7650c0" stroke-width="1.1"/><path d="M0.4 9.45H11.6" stroke="#7650c0" stroke-width="1.2" stroke-linecap="round"/><path d="M6 1.5V3.2" stroke="#7650c0" stroke-width="1"/><path d="M4.6 1.4H7.4" stroke="#7650c0" stroke-width="1.1" stroke-linecap="round"/></svg>
<div class="t" style="left:80px;top:891.00px;font-size:12px;font-weight:400;color:#3c3c3c;line-height:13.40px;">[Work order na...]</div>
<div class="t" style="left:208px;top:891.00px;font-size:11.4px;font-weight:400;color:#3c3c3c;line-height:12.73px;">[Reason]</div>
<div style="position:absolute;left:0px;top:912px;width:318px;height:32px;background:#fff;"></div>
<svg style="position:absolute;left:10.5px;top:922px;overflow:visible;" width="10" height="12" viewBox="0 0 10 12" fill="none"><path d="M5 11.4V1.2M1.1 5.1L5 1.2L8.9 5.1" stroke="#7b1d3c" stroke-width="1.2" stroke-linejoin="round" stroke-linecap="round"/></svg>
<svg style="position:absolute;left:41.4px;top:921.5px;overflow:visible;" width="13" height="13" viewBox="0 0 13 13" fill="none"><circle cx="6.5" cy="6.5" r="5.5" stroke="#7b1d3c" stroke-width="1.4"/><path d="M2.7 2.7L10.3 10.3" stroke="#7b1d3c" stroke-width="1.4"/></svg>
<div class="t" style="left:80px;top:923.00px;font-size:12px;font-weight:400;color:#3c3c3c;line-height:13.40px;">[Work order na...]</div>
<div class="t" style="left:208px;top:923.00px;font-size:11.4px;font-weight:400;color:#3c3c3c;line-height:12.73px;">[Reason]</div>
<div style="position:absolute;left:0px;top:944px;width:318px;height:32px;background:#f7f6fb;"></div>
<svg style="position:absolute;left:41.9px;top:955px;overflow:visible;" width="12" height="10" viewBox="0 0 12 10" fill="none"><path d="M1.4 7.6C1.4 4.8 3.4 3.2 6 3.2C8.6 3.2 10.6 4.8 10.6 7.6" stroke="#7650c0" stroke-width="1.1"/><path d="M0.4 9.45H11.6" stroke="#7650c0" stroke-width="1.2" stroke-linecap="round"/><path d="M6 1.5V3.2" stroke="#7650c0" stroke-width="1"/><path d="M4.6 1.4H7.4" stroke="#7650c0" stroke-width="1.1" stroke-linecap="round"/></svg>
<div class="t" style="left:80px;top:955.00px;font-size:12px;font-weight:400;color:#3c3c3c;line-height:13.40px;">[Work order na...]</div>
<div class="t" style="left:208px;top:955.00px;font-size:11.4px;font-weight:400;color:#3c3c3c;line-height:12.73px;">[Reason]</div>
<div style="position:absolute;left:0px;top:976px;width:318px;height:32px;background:#fff;"></div>
<svg style="position:absolute;left:10.5px;top:986px;overflow:visible;" width="10" height="12" viewBox="0 0 10 12" fill="none"><path d="M5 0.6V10.8M1.1 6.9L5 10.8L8.9 6.9" stroke="#4a4e80" stroke-width="1.2" stroke-linejoin="round" stroke-linecap="round"/></svg>
<svg style="position:absolute;left:41.9px;top:987px;overflow:visible;" width="12" height="10" viewBox="0 0 12 10" fill="none"><path d="M1.4 7.6C1.4 4.8 3.4 3.2 6 3.2C8.6 3.2 10.6 4.8 10.6 7.6" stroke="#7650c0" stroke-width="1.1"/><path d="M0.4 9.45H11.6" stroke="#7650c0" stroke-width="1.2" stroke-linecap="round"/><path d="M6 1.5V3.2" stroke="#7650c0" stroke-width="1"/><path d="M4.6 1.4H7.4" stroke="#7650c0" stroke-width="1.1" stroke-linecap="round"/></svg>
<div class="t" style="left:80px;top:987.00px;font-size:12px;font-weight:400;color:#3c3c3c;line-height:13.40px;">[Work order na...]</div>
<div class="t" style="left:208px;top:987.00px;font-size:11.4px;font-weight:400;color:#3c3c3c;line-height:12.73px;">[Reason]</div>
<div style="position:absolute;left:0px;top:1008px;width:318px;height:32px;background:#f7f6fb;"></div>
<svg style="position:absolute;left:10.5px;top:1018px;overflow:visible;" width="10" height="12" viewBox="0 0 10 12" fill="none"><path d="M5 0.6V10.8M1.1 6.9L5 10.8L8.9 6.9" stroke="#4a4e80" stroke-width="1.2" stroke-linejoin="round" stroke-linecap="round"/></svg>
<svg style="position:absolute;left:41.9px;top:1019px;overflow:visible;" width="12" height="10" viewBox="0 0 12 10" fill="none"><path d="M1.4 7.6C1.4 4.8 3.4 3.2 6 3.2C8.6 3.2 10.6 4.8 10.6 7.6" stroke="#7650c0" stroke-width="1.1"/><path d="M0.4 9.45H11.6" stroke="#7650c0" stroke-width="1.2" stroke-linecap="round"/><path d="M6 1.5V3.2" stroke="#7650c0" stroke-width="1"/><path d="M4.6 1.4H7.4" stroke="#7650c0" stroke-width="1.1" stroke-linecap="round"/></svg>
<div class="t" style="left:80px;top:1019.00px;font-size:12px;font-weight:400;color:#3c3c3c;line-height:13.40px;">[Work order na...]</div>
<div class="t" style="left:208px;top:1019.00px;font-size:11.4px;font-weight:400;color:#3c3c3c;line-height:12.73px;">[Reason]</div>
<div style="position:absolute;left:344px;top:72px;width:1096px;height:68px;background:#303262;border-bottom-left-radius:24px;"></div>
<div class="t" style="left:368px;top:86.00px;font-size:14px;font-weight:700;color:#fff;line-height:15.64px;">Home</div>
<div style="position:absolute;left:368px;top:112px;width:584px;height:28px;background:#434874;border-radius:12px 12px 0 0;"></div>
<div style="position:absolute;left:372px;top:116px;width:75px;height:24px;background:#2b2d4a;border-radius:8px 8px 0 0;"></div>
<div class="t" style="left:349.50px;width:120px;text-align:center;top:123.00px;font-size:11px;font-weight:700;color:#fff;line-height:12.29px;">Summary</div>
<div class="t" style="left:443.50px;width:120px;text-align:center;top:123.00px;font-size:11px;font-weight:700;color:#fff;line-height:12.29px;">Work matrix</div>
<div class="t" style="left:554.50px;width:120px;text-align:center;top:123.00px;font-size:11px;font-weight:700;color:#fff;line-height:12.29px;">Work manager</div>
<div class="t" style="left:673.50px;width:120px;text-align:center;top:123.00px;font-size:11px;font-weight:700;color:#fff;line-height:12.29px;">Labor calendars</div>
<div class="t" style="left:771.50px;width:120px;text-align:center;top:123.00px;font-size:11px;font-weight:700;color:#fff;line-height:12.29px;">Profile</div>
<div class="t" style="left:850.50px;width:120px;text-align:center;top:123.00px;font-size:11px;font-weight:700;color:#fff;line-height:12.29px;">Security</div>
<svg style="position:absolute;left:1151px;top:86px;overflow:visible;" width="17" height="17" viewBox="0 0 17 17" fill="none"><path d="M4 5V2.2C4 1.5 4.5 1 5.2 1H11.8C12.5 1 13 1.5 13 2.2V5" stroke="#fff" stroke-width="1.6"/><path d="M4 12H2.2C1.5 12 1 11.5 1 10.8V6.5C1 5.7 1.7 5 2.5 5H14.5C15.3 5 16 5.7 16 6.5V10.8C16 11.5 15.5 12 14.8 12H13" stroke="#fff" stroke-width="1.6"/><path d="M4 9.5H13V15.2C13 15.7 12.7 16 12.2 16H4.8C4.3 16 4 15.7 4 15.2Z" stroke="#fff" stroke-width="1.6"/></svg>
<div class="t" style="left:1175px;top:86.00px;font-size:14px;font-weight:400;color:#f4f4f8;line-height:15.64px;letter-spacing:-0.2px;">Print</div>
<svg style="position:absolute;left:1244px;top:85px;overflow:visible;" width="16" height="15" viewBox="0 0 16 15" fill="none"><path d="M1.63 5.49A6.6 6.6 0 0 1 12.4 2.4" stroke="#fff" stroke-width="1.6" stroke-linecap="round"/><path d="M15 1.3V6H10.6Z" stroke="#fff" stroke-width="1.6" stroke-linejoin="round"/><path d="M14.37 8.91A6.6 6.6 0 0 1 3.6 12" stroke="#fff" stroke-width="1.6" stroke-linecap="round"/><path d="M1 8.4H5.4L1 12.9Z" stroke="#fff" stroke-width="1.6" stroke-linejoin="round"/></svg>
<div class="t" style="left:1269px;top:86.00px;font-size:14px;font-weight:400;color:#f4f4f8;line-height:15.64px;letter-spacing:-0.55px;">Refresh</div>
<svg style="position:absolute;left:1355px;top:84px;overflow:visible;" width="17" height="17" viewBox="0 0 17 17" fill="none"><circle cx="8.5" cy="8.5" r="7.6" stroke="#fff" stroke-width="1.6"/><path d="M6.3 6.5C6.3 5.2 7.3 4.3 8.5 4.3C9.7 4.3 10.7 5.2 10.7 6.4C10.7 7.8 8.6 8 8.6 9.8" stroke="#fff" stroke-width="1.6" stroke-linecap="round"/><circle cx="8.6" cy="12.3" r="1" fill="#fff"/></svg>
<div class="t" style="left:1379px;top:86.00px;font-size:14px;font-weight:400;color:#f4f4f8;line-height:15.64px;letter-spacing:-0.2px;">Help</div>
<div class="t" style="left:835px;top:191.00px;font-size:14px;font-weight:700;color:#505050;line-height:15.64px;">Repair center</div>
<div style="position:absolute;left:835px;top:210px;width:170px;height:40px;background:#fff;border:1px solid #c7c6da;border-radius:4px;box-sizing:border-box;"></div>
<div class="t" style="left:843px;top:223.00px;font-size:14px;font-weight:400;color:#666;line-height:15.64px;">Main</div>
<svg style="position:absolute;left:985px;top:228px;overflow:visible;" width="10" height="5.5" viewBox="0 0 10 5.5" fill="none"><path d="M0 0 L5.0 5.5 L10 0" stroke="#3a3f70" stroke-width="1.5" stroke-linecap="round" stroke-linejoin="round"/></svg>
<div class="t" style="left:1029px;top:191.00px;font-size:14px;font-weight:700;color:#505050;line-height:15.64px;">Shop</div>
<div style="position:absolute;left:1029px;top:210px;width:170px;height:40px;background:#fff;border:1px solid #c7c6da;border-radius:4px;box-sizing:border-box;"></div>
<div class="t" style="left:1037px;top:223.00px;font-size:14px;font-weight:400;color:#666;line-height:15.64px;">All</div>
<svg style="position:absolute;left:1179px;top:228px;overflow:visible;" width="10" height="5.5" viewBox="0 0 10 5.5" fill="none"><path d="M0 0 L5.0 5.5 L10 0" stroke="#3a3f70" stroke-width="1.5" stroke-linecap="round" stroke-linejoin="round"/></svg>
<div class="t" style="left:1223px;top:185.00px;font-size:15.5px;font-weight:700;color:#454a7a;line-height:17.31px;">Bulletins</div>
<svg style="position:absolute;left:1223px;top:209px;overflow:visible;" width="12" height="16" viewBox="0 0 12 16" fill="none"><path d="M2 0.9H7.6L11.1 4.4V13.9C11.1 14.5 10.7 14.9 10.1 14.9H2C1.4 14.9 0.9 14.5 0.9 13.9V1.9C0.9 1.3 1.4 0.9 2 0.9Z" stroke="#3d4272" stroke-width="1.6" stroke-linejoin="round"/><path d="M7.4 0.9L11.1 4.6H7.4Z" fill="#3d4272"/><path d="M3 3.4H5.6M3 5.2H5.8" stroke="#3d4272" stroke-width="0.9"/><rect x="3" y="7" width="6" height="2.8" fill="#3d4272"/><path d="M6.3 12H8.8" stroke="#3d4272" stroke-width="1"/></svg>
<div class="t" style="left:1243px;top:210.00px;font-size:14px;font-weight:400;color:#454a7a;line-height:15.64px;">System notice</div>
<div class="t" style="left:345px;top:285.00px;font-size:14.3px;font-weight:700;color:#111;line-height:15.97px;">Work orders, preventive maintenance, and procedure versioning</div>
<div style="position:absolute;left:344.0px;top:312px;width:201.6px;height:192px;background:#fff;border:1px solid #d3d2e2;border-radius:12px;box-sizing:border-box;"></div>
<div class="t" style="left:360.0px;top:332.00px;font-size:16px;font-weight:700;color:#222;line-height:17.87px;">Assigned</div>
<div class="t" style="left:360.0px;top:353.00px;font-size:12.7px;font-weight:400;color:#555;line-height:14.19px;">Work orders</div>
<div class="t" style="left:354.80px;width:180px;text-align:center;top:388.00px;font-size:44px;font-weight:700;color:#1f1f1f;line-height:49.15px;transform:scaleX(1.04);">130</div>
<div style="position:absolute;left:360.0px;top:456px;width:90px;height:32px;background:#eccad4;border-radius:16px;"></div>
<div class="t" style="left:377.0px;top:465.00px;font-size:14px;font-weight:700;color:#7a1535;line-height:15.64px;">Alert</div>
<svg style="position:absolute;left:418.0px;top:464px;overflow:visible;" width="16" height="16" viewBox="0 0 16 16" fill="none"><circle cx="8" cy="8" r="7" stroke="#7a1535" stroke-width="1.5"/><path d="M8 4.2V9" stroke="#7a1535" stroke-width="1.7"/><circle cx="8" cy="11.4" r="1" fill="#7a1535"/></svg>
<div style="position:absolute;left:561.6px;top:312px;width:201.6px;height:192px;background:#fff;border:1px solid #d3d2e2;border-radius:12px;box-sizing:border-box;"></div>
<div class="t" style="left:577.6px;top:332.00px;font-size:16px;font-weight:700;color:#222;line-height:17.87px;">Requested</div>
<div class="t" style="left:577.6px;top:353.00px;font-size:12.7px;font-weight:400;color:#555;line-height:14.19px;">Work orders</div>
<div class="t" style="left:572.40px;width:180px;text-align:center;top:388.00px;font-size:44px;font-weight:700;color:#1f1f1f;line-height:49.15px;transform:scaleX(1.11);">48</div>
<div style="position:absolute;left:577.6px;top:456px;width:90px;height:32px;background:#eccad4;border-radius:16px;"></div>
<div class="t" style="left:594.6px;top:465.00px;font-size:14px;font-weight:700;color:#7a1535;line-height:15.64px;">Alert</div>
<svg style="position:absolute;left:635.6px;top:464px;overflow:visible;" width="16" height="16" viewBox="0 0 16 16" fill="none"><circle cx="8" cy="8" r="7" stroke="#7a1535" stroke-width="1.5"/><path d="M8 4.2V9" stroke="#7a1535" stroke-width="1.7"/><circle cx="8" cy="11.4" r="1" fill="#7a1535"/></svg>
<div style="position:absolute;left:779.2px;top:312px;width:201.6px;height:192px;background:#fff;border:1px solid #d3d2e2;border-radius:12px;box-sizing:border-box;"></div>
<div class="t" style="left:795.2px;top:332.00px;font-size:16px;font-weight:700;color:#222;line-height:17.87px;">Needs approval</div>
<div class="t" style="left:795.2px;top:353.00px;font-size:12.7px;font-weight:400;color:#555;line-height:14.19px;">Work order approvals</div>
<div class="t" style="left:790.00px;width:180px;text-align:center;top:388.00px;font-size:44px;font-weight:700;color:#1f1f1f;line-height:49.15px;transform:scaleX(1.1);">0</div>
<div style="position:absolute;left:996.8px;top:312px;width:201.6px;height:192px;background:#fff;border:1px solid #d3d2e2;border-radius:12px;box-sizing:border-box;"></div>
<div class="t" style="left:1012.8px;top:332.00px;font-size:16px;font-weight:700;color:#222;line-height:17.87px;">All open</div>
<div class="t" style="left:1012.8px;top:353.00px;font-size:12.7px;font-weight:400;color:#555;line-height:14.19px;">Work orders</div>
<div class="t" style="left:1007.60px;width:180px;text-align:center;top:388.00px;font-size:44px;font-weight:700;color:#1f1f1f;line-height:49.15px;transform:scaleX(1.12);">430</div>
<div style="position:absolute;left:1012.8px;top:456px;width:90px;height:32px;background:#eccad4;border-radius:16px;"></div>
<div class="t" style="left:1029.8px;top:465.00px;font-size:14px;font-weight:700;color:#7a1535;line-height:15.64px;">Alert</div>
<svg style="position:absolute;left:1070.8px;top:464px;overflow:visible;" width="16" height="16" viewBox="0 0 16 16" fill="none"><circle cx="8" cy="8" r="7" stroke="#7a1535" stroke-width="1.5"/><path d="M8 4.2V9" stroke="#7a1535" stroke-width="1.7"/><circle cx="8" cy="11.4" r="1" fill="#7a1535"/></svg>
<div style="position:absolute;left:1214.4px;top:312px;width:201.6px;height:192px;background:#fff;border:1px solid #d3d2e2;border-radius:12px;box-sizing:border-box;"></div>
<div class="t" style="left:1230.4px;top:332.00px;font-size:16px;font-weight:700;color:#222;line-height:17.87px;">Issued</div>
<div class="t" style="left:1230.4px;top:353.00px;font-size:12.7px;font-weight:400;color:#555;line-height:14.19px;">Work orders</div>
<div class="t" style="left:1225.20px;width:180px;text-align:center;top:388.00px;font-size:44px;font-weight:700;color:#1f1f1f;line-height:49.15px;transform:scaleX(1.03);">381</div>
<div style="position:absolute;left:1230.4px;top:456px;width:90px;height:32px;background:#eccad4;border-radius:16px;"></div>
<div class="t" style="left:1247.4px;top:465.00px;font-size:14px;font-weight:700;color:#7a1535;line-height:15.64px;">Alert</div>
<svg style="position:absolute;left:1288.4px;top:464px;overflow:visible;" width="16" height="16" viewBox="0 0 16 16" fill="none"><circle cx="8" cy="8" r="7" stroke="#7a1535" stroke-width="1.5"/><path d="M8 4.2V9" stroke="#7a1535" stroke-width="1.7"/><circle cx="8" cy="11.4" r="1" fill="#7a1535"/></svg>
<div style="position:absolute;left:344.0px;top:520px;width:256.0px;height:192px;background:#fff;border:1px solid #d3d2e2;border-radius:12px;box-sizing:border-box;"></div>
<div class="t" style="left:360.0px;top:540.00px;font-size:16px;font-weight:700;color:#222;line-height:17.87px;">Schedules due</div>
<div class="t" style="left:360.0px;top:561.00px;font-size:12.7px;font-weight:400;color:#555;line-height:14.19px;">PM</div>
<div class="t" style="left:382.00px;width:180px;text-align:center;top:596.00px;font-size:44px;font-weight:700;color:#1f1f1f;line-height:49.15px;transform:scaleX(1.1);">0</div>
<div style="position:absolute;left:616.0px;top:520px;width:256.0px;height:192px;background:#fff;border:1px solid #d3d2e2;border-radius:12px;box-sizing:border-box;"></div>
<div class="t" style="left:632.0px;top:539.00px;font-size:16.3px;font-weight:700;color:#222;line-height:18.21px;">Member approvals needed</div>
<div class="t" style="left:654.00px;width:180px;text-align:center;top:596.00px;font-size:44px;font-weight:700;color:#1f1f1f;line-height:49.15px;transform:scaleX(1.1);">0</div>
<div style="position:absolute;left:888.0px;top:520px;width:256.0px;height:192px;background:#fff;border:1px solid #d3d2e2;border-radius:12px;box-sizing:border-box;"></div>
<div class="t" style="left:904.0px;top:539.00px;font-size:16.3px;font-weight:700;color:#222;line-height:18.21px;">Overdue Non-PM</div>
<svg style="position:absolute;left:888.0px;top:520px;overflow:visible" width="256" height="192" viewBox="0 0 256 192"><path d="M49.62 141.60 A84.90 84.90 0 0 1 103.83 66.99 L112.26 92.92 A57.70 57.70 0 0 0 76.88 141.60 Z" fill="#20b1a9" stroke="#20b1a9" stroke-width="7.0" stroke-linejoin="round"/><path d="M112.58 64.15 A84.90 84.90 0 0 1 156.22 64.15 L147.80 90.08 A57.70 57.70 0 0 0 121.00 90.08 Z" fill="#e0b826" stroke="#e0b826" stroke-width="7.0" stroke-linejoin="round"/><path d="M164.97 66.99 A84.90 84.90 0 0 1 219.18 141.60 L191.92 141.60 A57.70 57.70 0 0 0 156.54 92.92 Z" fill="#c75a6a" stroke="#c75a6a" stroke-width="7.0" stroke-linejoin="round"/><path d="M126.20 50.8 L142.60 50.8 L134.40 66.3 Z" fill="#555" stroke="#fff" stroke-width="2.2" stroke-linejoin="round"/><path d="M126.40 50.8 L142.40 50.8 L134.40 65.3 Z" fill="#555"/><path d="M134.40 85V91" stroke="#222" stroke-width="1.3"/><path d="M91.4 104L95.6 107.5M173.4 107.5L177.1 103.7" stroke="#222" stroke-width="1.3"/><path d="M55.6 115.3L81.3 126" stroke="#444" stroke-width="1" stroke-dasharray="2.5 1.8"/></svg>
<div class="t" style="left:1001.00px;width:40px;text-align:center;top:591.00px;font-size:8.6px;font-weight:400;color:#333;line-height:9.61px;">1000</div>
<div class="t" style="left:945.80px;width:40px;text-align:center;top:617.00px;font-size:8.6px;font-weight:400;color:#222;line-height:9.61px;">500</div>
<div class="t" style="left:1057.00px;width:40px;text-align:center;top:617.00px;font-size:8.6px;font-weight:400;color:#333;line-height:9.61px;">1500</div>
<div class="t" style="left:983.00px;width:80px;text-align:center;top:629.00px;font-size:14px;font-weight:700;color:#23233a;line-height:15.64px;">1001</div>
<div class="t" style="left:973.00px;width:100px;text-align:center;top:644.00px;font-size:10.8px;font-weight:400;color:#8b89a8;line-height:12.06px;">work orders</div>
<div class="t" style="left:933.70px;width:30px;text-align:center;top:674.00px;font-size:10.3px;font-weight:400;color:#222;line-height:11.51px;">0</div>
<div class="t" style="left:1076.50px;width:40px;text-align:center;top:674.00px;font-size:10.3px;font-weight:400;color:#222;line-height:11.51px;">2000</div>
<div style="position:absolute;left:1160.0px;top:520px;width:256.0px;height:192px;background:#fff;border:1px solid #d3d2e2;border-radius:12px;box-sizing:border-box;"></div>
<div class="t" style="left:1176.0px;top:539.00px;font-size:16.3px;font-weight:700;color:#222;line-height:18.21px;">Overdue PM</div>
<svg style="position:absolute;left:1160.0px;top:520px;overflow:visible" width="256" height="192" viewBox="0 0 256 192"><path d="M49.62 141.60 A84.90 84.90 0 0 1 103.83 66.99 L112.26 92.92 A57.70 57.70 0 0 0 76.88 141.60 Z" fill="#20b1a9" stroke="#20b1a9" stroke-width="7.0" stroke-linejoin="round"/><path d="M112.58 64.15 A84.90 84.90 0 0 1 156.22 64.15 L147.80 90.08 A57.70 57.70 0 0 0 121.00 90.08 Z" fill="#e0b826" stroke="#e0b826" stroke-width="7.0" stroke-linejoin="round"/><path d="M164.97 66.99 A84.90 84.90 0 0 1 219.18 141.60 L191.92 141.60 A57.70 57.70 0 0 0 156.54 92.92 Z" fill="#c75a6a" stroke="#c75a6a" stroke-width="7.0" stroke-linejoin="round"/><path d="M126.20 50.8 L142.60 50.8 L134.40 66.3 Z" fill="#555" stroke="#fff" stroke-width="2.2" stroke-linejoin="round"/><path d="M126.40 50.8 L142.40 50.8 L134.40 65.3 Z" fill="#555"/><path d="M134.40 85V91" stroke="#222" stroke-width="1.3"/><path d="M91.4 104L95.6 107.5M173.4 107.5L177.1 103.7" stroke="#222" stroke-width="1.3"/><path d="M55.6 115.3L81.3 126" stroke="#444" stroke-width="1" stroke-dasharray="2.5 1.8"/></svg>
<div class="t" style="left:1273.00px;width:40px;text-align:center;top:591.00px;font-size:8.6px;font-weight:400;color:#333;line-height:9.61px;">1000</div>
<div class="t" style="left:1217.80px;width:40px;text-align:center;top:617.00px;font-size:8.6px;font-weight:400;color:#222;line-height:9.61px;">500</div>
<div class="t" style="left:1329.00px;width:40px;text-align:center;top:617.00px;font-size:8.6px;font-weight:400;color:#333;line-height:9.61px;">1500</div>
<div class="t" style="left:1255.00px;width:80px;text-align:center;top:629.00px;font-size:14px;font-weight:700;color:#23233a;line-height:15.64px;">1001</div>
<div class="t" style="left:1245.00px;width:100px;text-align:center;top:644.00px;font-size:10.8px;font-weight:400;color:#8b89a8;line-height:12.06px;">work orders</div>
<div class="t" style="left:1205.70px;width:30px;text-align:center;top:674.00px;font-size:10.3px;font-weight:400;color:#222;line-height:11.51px;">0</div>
<div class="t" style="left:1348.50px;width:40px;text-align:center;top:674.00px;font-size:10.3px;font-weight:400;color:#222;line-height:11.51px;">2000</div>
<div style="position:absolute;left:344px;top:728px;width:528.0px;height:300px;background:#fff;border:1px solid #d3d2e2;border-radius:12px;box-sizing:border-box;"></div>
<div class="t" style="left:360px;top:748.00px;font-size:16px;font-weight:700;color:#222;line-height:17.87px;">Work orders over time</div>
<div class="t" style="left:360px;top:770.00px;font-size:12.5px;font-weight:400;color:#555;line-height:13.96px;">PM vs Non-PM</div>
<svg style="position:absolute;left:0;top:0;overflow:visible" width="1440" height="1024" viewBox="0 0 1440 1024"><path d="M464 958.88H811" stroke="#d9d8e5" stroke-width="1.5"/><path d="M464 914.56H811" stroke="#d9d8e5" stroke-width="1.5"/><path d="M464 870.24H811" stroke="#d9d8e5" stroke-width="1.5"/><path d="M464 825.92H811" stroke="#d9d8e5" stroke-width="1.5"/><polyline points="478.46,994.34 507.38,985.47 536.30,976.61 565.22,967.74 594.14,967.74 623.06,950.02 651.98,923.42 680.90,905.70 709.82,896.83 738.74,887.97 767.66,870.24 796.58,825.92" stroke="#e0b826" stroke-width="2" fill="none" stroke-dasharray="9 4 3 4" stroke-linejoin="round"/><polyline points="478.46,976.61 507.38,950.02 536.30,950.02 565.22,941.15 594.14,905.70 623.06,896.83 651.98,861.38 680.90,852.51 709.82,852.51 738.74,834.78 767.66,825.92 796.58,825.92" stroke="#4b5079" stroke-width="2" fill="none" stroke-linejoin="round"/></svg>
<div class="t" style="left:407.50px;width:40px;text-align:right;top:953.00px;font-size:12px;font-weight:400;color:#555;line-height:13.40px;">100</div>
<div class="t" style="left:407.50px;width:40px;text-align:right;top:909.00px;font-size:12px;font-weight:400;color:#555;line-height:13.40px;">200</div>
<div class="t" style="left:407.50px;width:40px;text-align:right;top:865.00px;font-size:12px;font-weight:400;color:#555;line-height:13.40px;">300</div>
<div class="t" style="left:407.50px;width:40px;text-align:right;top:820.00px;font-size:12px;font-weight:400;color:#555;line-height:13.40px;">400</div>
<div class="t" style="left:367.5px;top:891px;width:80px;text-align:center;font-size:12.3px;line-height:14px;color:#777;transform:rotate(-90deg);">Work orders</div>
<div style="position:absolute;left:887.5px;top:728px;width:528.0px;height:300px;background:#fff;border:1px solid #d3d2e2;border-radius:12px;box-sizing:border-box;"></div>
<div class="t" style="left:904px;top:748.00px;font-size:16px;font-weight:700;color:#222;line-height:17.87px;">Overdue</div>
<div class="t" style="left:904px;top:769.00px;font-size:12.7px;font-weight:400;color:#555;line-height:14.19px;">Work orders by type</div>
<svg style="position:absolute;left:0;top:0;overflow:visible" width="1440" height="1024" viewBox="0 0 1440 1024"><path d="M1153.50 850.57 A90.50 90.50 0 0 1 1237.53 918.01 L1207.23 924.73 A59.50 59.50 0 0 0 1153.50 881.60 Z" fill="#c2e2c1" stroke="#c2e2c1" stroke-width="5.0" stroke-linejoin="round"/><path d="M1240.32 924.56 A91.80 91.80 0 0 1 1241.76 938.30 L1209.43 938.02 A59.50 59.50 0 0 0 1208.75 931.56 Z" fill="#c85a6b" stroke="#c85a6b" stroke-width="5.0" stroke-linejoin="round"/><path d="M1240.40 945.29 A90.50 90.50 0 0 1 1198.25 1017.57 L1182.73 990.69 A59.50 59.50 0 0 0 1209.36 945.02 Z" fill="#e0b826" stroke="#e0b826" stroke-width="5.0" stroke-linejoin="round"/><path d="M1192.19 1021.07 A90.50 90.50 0 0 1 1114.95 1024.44 L1128.07 996.31 A59.50 59.50 0 0 0 1176.67 994.19 Z" fill="#7fa8d8" stroke="#7fa8d8" stroke-width="5.0" stroke-linejoin="round"/><path d="M1108.61 1021.48 A90.50 90.50 0 0 1 1146.50 850.57 L1146.50 881.60 A59.50 59.50 0 0 0 1121.73 993.35 Z" fill="#4b5179" stroke="#4b5179" stroke-width="5.0" stroke-linejoin="round"/><path d="M1066.6 863L1078.8 872" stroke="#4b5179" stroke-width="1.2"/><path d="M1201 857.8L1206 853L1212.7 848" stroke="#a8d8a8" stroke-width="1.2"/><path d="M1247 929.6L1260 930" stroke="#d06a7a" stroke-width="1.2"/></svg>
<div class="t" style="left:930.6px;top:855.00px;font-size:12.6px;font-weight:400;color:#222;line-height:14.07px;">Emergency: 109 (34%)</div>
<div class="t" style="left:1218.4px;top:840.00px;font-size:12.7px;font-weight:400;color:#222;line-height:14.19px;">Preventive: 80 (25%)</div>
<div class="t" style="left:1267.8px;top:923.00px;font-size:12.5px;font-weight:400;color:#222;line-height:13.96px;">Past due: 10 (3%)</div>
<div class="t" style="left:1176.00px;width:40px;text-align:center;top:878.00px;font-size:12.5px;font-weight:400;color:#222;line-height:13.96px;">25%</div>
<div class="t" style="left:1057.50px;width:40px;text-align:center;top:922.00px;font-size:12.5px;font-weight:400;color:#fff;line-height:13.96px;">34%</div>
<div class="t" style="left:1198.00px;width:40px;text-align:center;top:968.00px;font-size:12.5px;font-weight:400;color:#fff;line-height:13.96px;">13%</div>
<div class="t" style="left:1122.00px;width:60px;text-align:center;top:924.00px;font-size:15.5px;font-weight:700;color:#23233a;line-height:17.31px;">320</div>
<div class="t" style="left:1101.70px;width:100px;text-align:center;top:942.00px;font-size:10.6px;font-weight:400;color:#8b89a8;line-height:11.84px;">work orders</div>
<div style="position:absolute;left:344px;top:980px;width:1096px;height:60px;background:#fbfaff;border-top-left-radius:24px;box-shadow:0 -2px 12px rgba(40,40,70,0.16);"></div>
<div style="position:absolute;left:368px;top:980px;width:380px;height:28px;background:#434874;border-radius:0 0 12px 12px;"></div>
<div style="position:absolute;left:372px;top:980px;width:128px;height:24px;background:#2b2d4a;border-radius:0 0 8px 8px;"></div>
<div class="t" style="left:385px;top:987.00px;font-size:11px;font-weight:700;color:#fff;line-height:12.29px;">Work orders &amp; PMs</div>
<div class="t" style="left:524px;top:988.00px;font-size:10.6px;font-weight:700;color:#fff;line-height:11.84px;">Projects</div>
<div class="t" style="left:606px;top:987.00px;font-size:11px;font-weight:700;color:#fff;line-height:12.29px;">Inventory &amp; Purchasing</div>
</body></html>
